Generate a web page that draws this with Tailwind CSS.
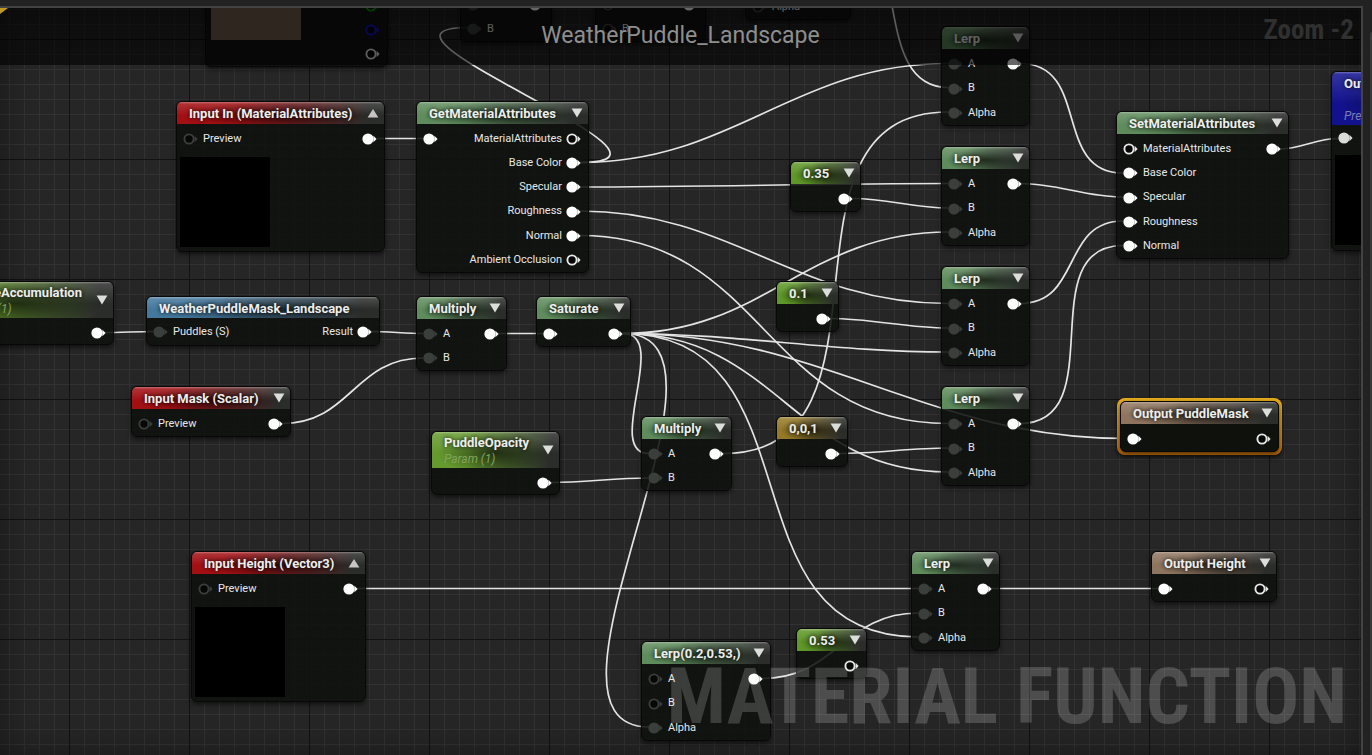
<!DOCTYPE html>
<html lang="en">
<head>
<meta charset="utf-8">
<title>WeatherPuddle_Landscape</title>
<script src="https://cdn.jsdelivr.net/npm/@tailwindcss/browser@4"></script>
</head>
<body class="flex h-screen overflow-hidden bg-[#222222] pt-[6px] font-[Roboto,sans-serif] text-[11px] text-[#e8e8e8]">

<svg class="hidden" aria-hidden="true">
  <symbol id="on" viewBox="0 0 16 12"><circle cx="6" cy="6" r="5.6" fill="#fff"/><path d="M11.4 2.8 14.6 6 11.4 9.2z" fill="#fff"/></symbol>
  <symbol id="off" viewBox="0 0 16 12"><circle cx="6" cy="6" r="5.6" fill="#3b3f3c"/><path d="M11.4 2.8 14.6 6 11.4 9.2z" fill="#3b3f3c"/></symbol>
  <symbol id="ring" viewBox="0 0 16 12"><circle cx="6" cy="6" r="4.6" fill="#060706" stroke="currentColor" stroke-width="1.9"/><path d="M11.6 2.8 14.6 6 11.6 9.2z" fill="currentColor"/></symbol>
  <symbol id="down" viewBox="0 0 12 10"><path d="M.6.6h10.8L6 9.4z" fill="#dcdedc"/></symbol>
  <symbol id="up" viewBox="0 0 12 10"><path d="M.6 9.4h10.8L6 1z" fill="#c8c4c4"/></symbol>
</svg>

<main class="relative flex-1 overflow-hidden border-t-2 border-r-2 border-[#434343] bg-[#262626] bg-[linear-gradient(to_right,#121212_1px,transparent_1px),linear-gradient(to_bottom,#121212_1px,transparent_1px),linear-gradient(to_right,#323232_1px,transparent_1px),linear-gradient(to_bottom,#323232_1px,transparent_1px)] bg-[size:120px_120px,120px_120px,15px_15px,15px_15px] bg-[position:69px_31px,69px_31px,9px_1px,9px_1px]">

  <!-- Edge shading of the graph panel -->
  <div class="absolute inset-0 shadow-[inset_0_0_36px_rgba(0,0,0,0.4)]"></div>

  <!-- Graph space -->
  <div class="absolute -top-2 left-0
    [&>article]:absolute [&>article]:flex [&>article]:flex-col [&>article]:overflow-hidden [&>article]:rounded-md [&>article]:border [&>article]:border-[#070807] [&>article]:bg-[#0e110e]/88 [&>article]:shadow-[0_2px_5px_rgba(0,0,0,0.6)]
    [&_header]:flex [&_header]:h-[22px] [&_header]:shrink-0 [&_header]:items-center [&_header]:justify-between [&_header]:pr-[5px] [&_header]:pl-3
    [&_header]:bg-[linear-gradient(to_bottom,rgba(255,255,255,0.4)_0,rgba(255,255,255,0.14)_2px,transparent_60%),radial-gradient(ellipse_46%_60%_at_50%_58%,rgba(0,0,0,0.6),transparent),linear-gradient(97deg,var(--tint)_30%,#2b2d2b_92%)]
    [&_h2]:pt-[2px] [&_h2]:text-[13px] [&_h2]:leading-4 [&_h2]:font-bold [&_h2]:whitespace-nowrap [&_h2]:text-[#eceeec] [&_h2]:[text-shadow:0_0_4px_rgba(0,0,0,0.9)]
    [&_header_svg]:h-[10px] [&_header_svg]:w-3
    [&_ul]:flex [&_ul]:grow [&_ul]:flex-col [&_ul]:justify-between [&_ul]:pt-[3px]
    [&_li]:flex [&_li]:h-6 [&_li]:items-center [&_li]:gap-1 [&_li]:pr-[6px] [&_li]:pl-[6px] [&_li]:whitespace-nowrap
    [&_li_svg]:h-3 [&_li_svg]:w-4 [&_li_svg]:shrink-0">

    <!-- Wires -->
    <svg class="absolute top-0 left-0 overflow-visible" width="1" height="1" fill="none" stroke="#e4e4e4" stroke-width="1.7" aria-hidden="true">
      <path d="M377 138.500H423"/>
      <path d="M580 162.500C717 162.500 335 27.500 469 27.500"/>
      <path d="M580 162.500C735 162.500 793 63.500 948 63.500"/>
      <path d="M580 187C704 187 824 183.500 948 183.500"/>
      <path d="M580 211C733 211 795 303.500 948 303.500"/>
      <path d="M580 235.500C765 235.500 763 423.500 948 423.500"/>
      <path d="M853 198.500C888 198.500 913 208 948 208"/>
      <path d="M830 318.500C872 318.500 906 328 948 328"/>
      <path d="M839 453.500C877 453.500 910 448 948 448"/>
      <path d="M892 6C899 42 906 87.500 948 87.500"/>
      <path d="M623 333.500C765 333.500 806 232 948 232"/>
      <path d="M623 333.500C738 333.500 833 352 948 352"/>
      <path d="M623 333.500C778 333.500 793 472 948 472"/>
      <path d="M623 333.500C826 333.500 924 438.500 1127 438.500"/>
      <path d="M623 333.500C671 333.500 603 453.500 649 453.500"/>
      <path d="M623 333.500C761 333.500 512 727 649 727"/>
      <path d="M623 333.500C823 333.500 718 637 918 637"/>
      <path d="M723 453.500C912 453.500 759 112 948 112"/>
      <path d="M551 482.500C585 482.500 614 478 648 478"/>
      <path d="M498 333.500H543"/>
      <path d="M371 331.500C388 331.500 406 333.500 423 333.500"/>
      <path d="M105 332.500C120 332.500 138 331.500 153 331.500"/>
      <path d="M282 423.500C351 423.500 354 358 423 358"/>
      <path d="M357 588.500H918"/>
      <path d="M762 678.500C836 678.500 844 613 918 613"/>
      <path d="M990 588.500H1158"/>
      <path d="M1020 63.500C1091 63.500 1052 173 1123 173"/>
      <path d="M1020 183.500C1059 183.500 1084 197 1123 197"/>
      <path d="M1020 303.500C1082 303.500 1061 221 1123 221"/>
      <path d="M1020 423.500C1113 423.500 1030 245.500 1123 245.500"/>
      <path d="M1279 149C1302 149 1315 138.500 1338 138.500"/>
    </svg>

    <!-- Nodes running off the top edge -->
    <article class="top-[-183px] left-[205px] h-[250px] w-[183px] [--tint:#3d5f86]">
      <header></header>
      <div class="flex grow items-end pl-[5px]">
        <div class="mb-[26px] h-[90px] w-[90px] bg-[#75604f]"></div>
        <ul>
          <li class="ml-auto text-[#00a000]"><svg><use href="#ring"/></svg></li>
          <li class="ml-auto text-[#1414d8]"><svg><use href="#ring"/></svg></li>
          <li class="ml-auto"><svg><use href="#ring"/></svg></li>
        </ul>
      </div>
    </article>
    <article class="top-[-33px] left-[460px] h-[75px] w-[92px] [--tint:#5f8c5d]">
      <header></header>
      <ul>
        <li><svg><use href="#off"/></svg><svg class="ml-auto"><use href="#on"/></svg></li>
        <li><svg><use href="#off"/></svg>B</li>
      </ul>
    </article>
    <article class="top-[-33px] left-[595px] h-[75px] w-[111px] [--tint:#5f8c5d]">
      <header></header>
      <ul>
        <li><svg class="text-[#3b3f3c]"><use href="#ring"/></svg><svg class="ml-auto"><use href="#on"/></svg></li>
        <li><svg class="text-[#3b3f3c]"><use href="#ring"/></svg>B</li>
      </ul>
    </article>
    <article class="top-[-80px] left-[745px] h-[100px] w-[106px] [--tint:#5f8c5d]">
      <header></header>
      <ul>
        <li><svg><use href="#off"/></svg></li>
        <li><svg><use href="#off"/></svg></li>
        <li><svg class="text-[#3b3f3c]"><use href="#ring"/></svg>Alpha</li>
      </ul>
    </article>

    <!-- Function inputs -->
    <article class="top-[101px] left-[176px] h-[151px] w-[209px] [--tint:#a31014]">
      <header><h2>Input In (MaterialAttributes)</h2><button aria-label="Hide preview"><svg><use href="#up"/></svg></button></header>
      <ul class="grow-0!"><li><svg class="text-[#3b3f3c]"><use href="#ring"/></svg>Preview<svg class="ml-auto"><use href="#on"/></svg></li></ul>
      <div class="mt-[6px] ml-[3px] h-[90px] w-[90px] bg-black"></div>
    </article>
    <article class="top-[386px] left-[131px] h-[51px] w-[160px] [--tint:#a31014]">
      <header><h2>Input Mask (Scalar)</h2><button aria-label="Show preview"><svg><use href="#down"/></svg></button></header>
      <ul><li><svg class="text-[#3b3f3c]"><use href="#ring"/></svg>Preview<svg class="ml-auto"><use href="#on"/></svg></li></ul>
    </article>
    <article class="top-[551px] left-[191px] h-[151px] w-[175px] [--tint:#a31014]">
      <header><h2>Input Height (Vector3)</h2><button aria-label="Hide preview"><svg><use href="#up"/></svg></button></header>
      <ul class="grow-0!"><li><svg class="text-[#3b3f3c]"><use href="#ring"/></svg>Preview<svg class="ml-auto"><use href="#on"/></svg></li></ul>
      <div class="mt-[6px] ml-[3px] h-[90px] w-[90px] bg-black"></div>
    </article>

    <!-- Puddle mask chain -->
    <article class="top-[281px] right-[-114px] h-[64px] w-[200px] [--tint:#5f9228]">
      <header class="h-[36px]!"><div class="ml-auto pr-[14px]"><h2>PuddleAccumulation</h2><p class="text-[12px] leading-4 text-[#83a35c] italic">Param (1)</p></div><button aria-label="Show preview"><svg><use href="#down"/></svg></button></header>
      <ul><li><svg class="ml-auto"><use href="#on"/></svg></li></ul>
    </article>
    <article class="top-[296px] left-[146px] h-[50px] w-[234px] [--tint:#44789d]">
      <header class="h-[21px]!"><h2>WeatherPuddleMask_Landscape</h2></header>
      <ul class="pt-[2px]!"><li><svg><use href="#off"/></svg>Puddles (S)<span class="ml-auto">Result</span><svg><use href="#on"/></svg></li></ul>
    </article>
    <article class="top-[296px] left-[416px] h-[75px] w-[91px] [--tint:#5f8c5d]">
      <header><h2>Multiply</h2><button aria-label="Show preview"><svg><use href="#down"/></svg></button></header>
      <ul>
        <li><svg><use href="#off"/></svg>A<svg class="ml-auto"><use href="#on"/></svg></li>
        <li><svg><use href="#off"/></svg>B</li>
      </ul>
    </article>
    <article class="top-[296px] left-[536px] h-[51px] w-[95px] [--tint:#5f8c5d]">
      <header><h2>Saturate</h2><button aria-label="Show preview"><svg><use href="#down"/></svg></button></header>
      <ul><li><svg><use href="#on"/></svg><svg class="ml-auto"><use href="#on"/></svg></li></ul>
    </article>
    <article class="top-[431px] left-[431px] h-[64px] w-[129px] [--tint:#659a2e]">
      <header class="h-[36px]!"><div><h2>PuddleOpacity</h2><p class="text-[12px] leading-4 text-[#83a35c] italic">Param (1)</p></div><button aria-label="Show preview"><svg><use href="#down"/></svg></button></header>
      <ul><li><svg class="ml-auto"><use href="#on"/></svg></li></ul>
    </article>
    <article class="top-[416px] left-[641px] h-[75px] w-[91px] [--tint:#5f8c5d]">
      <header><h2>Multiply</h2><button aria-label="Show preview"><svg><use href="#down"/></svg></button></header>
      <ul>
        <li><svg><use href="#off"/></svg>A<svg class="ml-auto"><use href="#on"/></svg></li>
        <li><svg><use href="#off"/></svg>B</li>
      </ul>
    </article>

    <!-- Attribute unpacking and packing -->
    <article class="top-[101px] left-[416px] h-[172px] w-[173px] [--tint:#5f8c5d]">
      <header><h2>GetMaterialAttributes</h2><button aria-label="Show preview"><svg><use href="#down"/></svg></button></header>
      <ul>
        <li><svg><use href="#on"/></svg><span class="ml-auto">MaterialAttributes</span><svg><use href="#ring"/></svg></li>
        <li><span class="ml-auto">Base Color</span><svg><use href="#on"/></svg></li>
        <li><span class="ml-auto">Specular</span><svg><use href="#on"/></svg></li>
        <li><span class="ml-auto">Roughness</span><svg><use href="#on"/></svg></li>
        <li><span class="ml-auto">Normal</span><svg><use href="#on"/></svg></li>
        <li><span class="ml-auto">Ambient Occlusion</span><svg><use href="#ring"/></svg></li>
      </ul>
    </article>
    <article class="top-[111px] left-[1116px] h-[148px] w-[173px] [--tint:#5f8c5d]">
      <header><h2>SetMaterialAttributes</h2><button aria-label="Show preview"><svg><use href="#down"/></svg></button></header>
      <ul>
        <li><svg><use href="#ring"/></svg>MaterialAttributes<svg class="ml-auto"><use href="#on"/></svg></li>
        <li><svg><use href="#on"/></svg>Base Color</li>
        <li><svg><use href="#on"/></svg>Specular</li>
        <li><svg><use href="#on"/></svg>Roughness</li>
        <li><svg><use href="#on"/></svg>Normal</li>
      </ul>
    </article>

    <!-- Constants -->
    <article class="top-[161px] left-[790px] h-[51px] w-[71px] [--tint:#5f9728]">
      <header><h2>0.35</h2><button aria-label="Show preview"><svg><use href="#down"/></svg></button></header>
      <ul><li><svg class="ml-auto"><use href="#on"/></svg></li></ul>
    </article>
    <article class="top-[281px] left-[776px] h-[51px] w-[63px] [--tint:#5f9728]">
      <header><h2>0.1</h2><button aria-label="Show preview"><svg><use href="#down"/></svg></button></header>
      <ul><li><svg class="ml-auto"><use href="#on"/></svg></li></ul>
    </article>
    <article class="top-[416px] left-[776px] h-[51px] w-[72px] [--tint:#967a28]">
      <header><h2>0,0,1</h2><button aria-label="Show preview"><svg><use href="#down"/></svg></button></header>
      <ul><li><svg class="ml-auto"><use href="#on"/></svg></li></ul>
    </article>
    <article class="top-[628px] left-[796px] h-[51px] w-[71px] [--tint:#5f9728]">
      <header><h2>0.53</h2><button aria-label="Show preview"><svg><use href="#down"/></svg></button></header>
      <ul><li><svg class="ml-auto"><use href="#ring"/></svg></li></ul>
    </article>

    <!-- Lerps -->
    <article class="top-[26px] left-[941px] h-[100px] w-[89px] [--tint:#5f8c5d]">
      <header><h2>Lerp</h2><button aria-label="Show preview"><svg><use href="#down"/></svg></button></header>
      <ul>
        <li><svg><use href="#off"/></svg>A<svg class="ml-auto"><use href="#on"/></svg></li>
        <li><svg><use href="#off"/></svg>B</li>
        <li><svg><use href="#off"/></svg>Alpha</li>
      </ul>
    </article>
    <article class="top-[146px] left-[941px] h-[100px] w-[89px] [--tint:#5f8c5d]">
      <header><h2>Lerp</h2><button aria-label="Show preview"><svg><use href="#down"/></svg></button></header>
      <ul>
        <li><svg><use href="#off"/></svg>A<svg class="ml-auto"><use href="#on"/></svg></li>
        <li><svg><use href="#off"/></svg>B</li>
        <li><svg><use href="#off"/></svg>Alpha</li>
      </ul>
    </article>
    <article class="top-[266px] left-[941px] h-[100px] w-[89px] [--tint:#5f8c5d]">
      <header><h2>Lerp</h2><button aria-label="Show preview"><svg><use href="#down"/></svg></button></header>
      <ul>
        <li><svg><use href="#off"/></svg>A<svg class="ml-auto"><use href="#on"/></svg></li>
        <li><svg><use href="#off"/></svg>B</li>
        <li><svg><use href="#off"/></svg>Alpha</li>
      </ul>
    </article>
    <article class="top-[386px] left-[941px] h-[100px] w-[89px] [--tint:#5f8c5d]">
      <header><h2>Lerp</h2><button aria-label="Show preview"><svg><use href="#down"/></svg></button></header>
      <ul>
        <li><svg><use href="#off"/></svg>A<svg class="ml-auto"><use href="#on"/></svg></li>
        <li><svg><use href="#off"/></svg>B</li>
        <li><svg><use href="#off"/></svg>Alpha</li>
      </ul>
    </article>
    <article class="top-[551px] left-[911px] h-[100px] w-[89px] [--tint:#5f8c5d]">
      <header><h2>Lerp</h2><button aria-label="Show preview"><svg><use href="#down"/></svg></button></header>
      <ul>
        <li><svg><use href="#off"/></svg>A<svg class="ml-auto"><use href="#on"/></svg></li>
        <li><svg><use href="#off"/></svg>B</li>
        <li><svg><use href="#off"/></svg>Alpha</li>
      </ul>
    </article>
    <article class="top-[641px] left-[641px] h-[100px] w-[130px] [--tint:#5f8c5d]">
      <header><h2>Lerp(0.2,0.53,)</h2><button aria-label="Show preview"><svg><use href="#down"/></svg></button></header>
      <ul>
        <li><svg class="text-[#3b3f3c]"><use href="#ring"/></svg>A<svg class="ml-auto"><use href="#on"/></svg></li>
        <li><svg class="text-[#3b3f3c]"><use href="#ring"/></svg>B</li>
        <li><svg><use href="#off"/></svg>Alpha</li>
      </ul>
    </article>

    <!-- Function outputs -->
    <article class="top-[71px] left-[1331px] h-[180px] w-[190px] [--tint:#12128e]">
      <header class="h-[53px]! items-start! pt-[2px]"><div><h2>Output Result</h2><p class="pt-4 text-[12px] leading-4 text-[#7c7cb0] italic">Preview</p></div></header>
      <ul class="grow-0! pt-px!"><li><svg class="opacity-85"><use href="#on"/></svg></li></ul>
      <div class="mt-[5px] ml-[3px] h-[90px] w-[90px] bg-black"></div>
    </article>
    <div class="absolute top-[398px] left-[1117px] h-[57px] w-[165px] rounded-lg bg-linear-to-b from-[#e8ae1c] to-[#bf6a08] shadow-[0_2px_5px_rgba(0,0,0,0.6)]"></div>
    <div class="absolute top-[401px] left-[1120px] h-[51px] w-[159px] rounded-md bg-[#1c1408]"></div>
    <article class="top-[401px] left-[1120px] h-[51px] w-[159px] [--tint:#8f755f]">
      <header><h2>Output PuddleMask</h2><button aria-label="Show preview"><svg><use href="#down"/></svg></button></header>
      <ul><li><svg><use href="#on"/></svg><svg class="ml-auto"><use href="#ring"/></svg></li></ul>
    </article>
    <article class="top-[551px] left-[1151px] h-[51px] w-[126px] [--tint:#8f755f]">
      <header><h2>Output Height</h2><button aria-label="Show preview"><svg><use href="#down"/></svg></button></header>
      <ul><li><svg><use href="#on"/></svg><svg class="ml-auto"><use href="#ring"/></svg></li></ul>
    </article>
  </div>

  <!-- Title bar over the graph -->
  <div class="absolute inset-x-0 top-0 flex h-[57px] items-center justify-center bg-black/60">
    <svg class="absolute top-0 left-0 h-2 w-2" viewBox="0 0 8 8" aria-hidden="true"><path d="M0 0h8L0 6z" fill="#c09a20"/></svg>
    <h1 class="text-[23px] text-[#8e8e8e]">WeatherPuddle_Landscape</h1>
    <p class="absolute top-1 right-[7px] font-['Roboto_Condensed','Liberation_Sans_Narrow',Roboto,sans-serif] text-[27px] leading-9 font-bold text-[#303030]">Zoom -2</p>
  </div>

  <p class="absolute right-[14px] bottom-[10px] font-['Roboto_Condensed','Liberation_Sans_Narrow',Roboto,sans-serif] text-[78px] leading-24 font-bold whitespace-nowrap text-white/18">MATERIAL FUNCTION</p>
</main>

<aside class="flex w-[9px] justify-end pt-[26px]"><div class="w-[2px] rounded-tl bg-[#3a3a3a]"></div></aside>
</body>
</html>
